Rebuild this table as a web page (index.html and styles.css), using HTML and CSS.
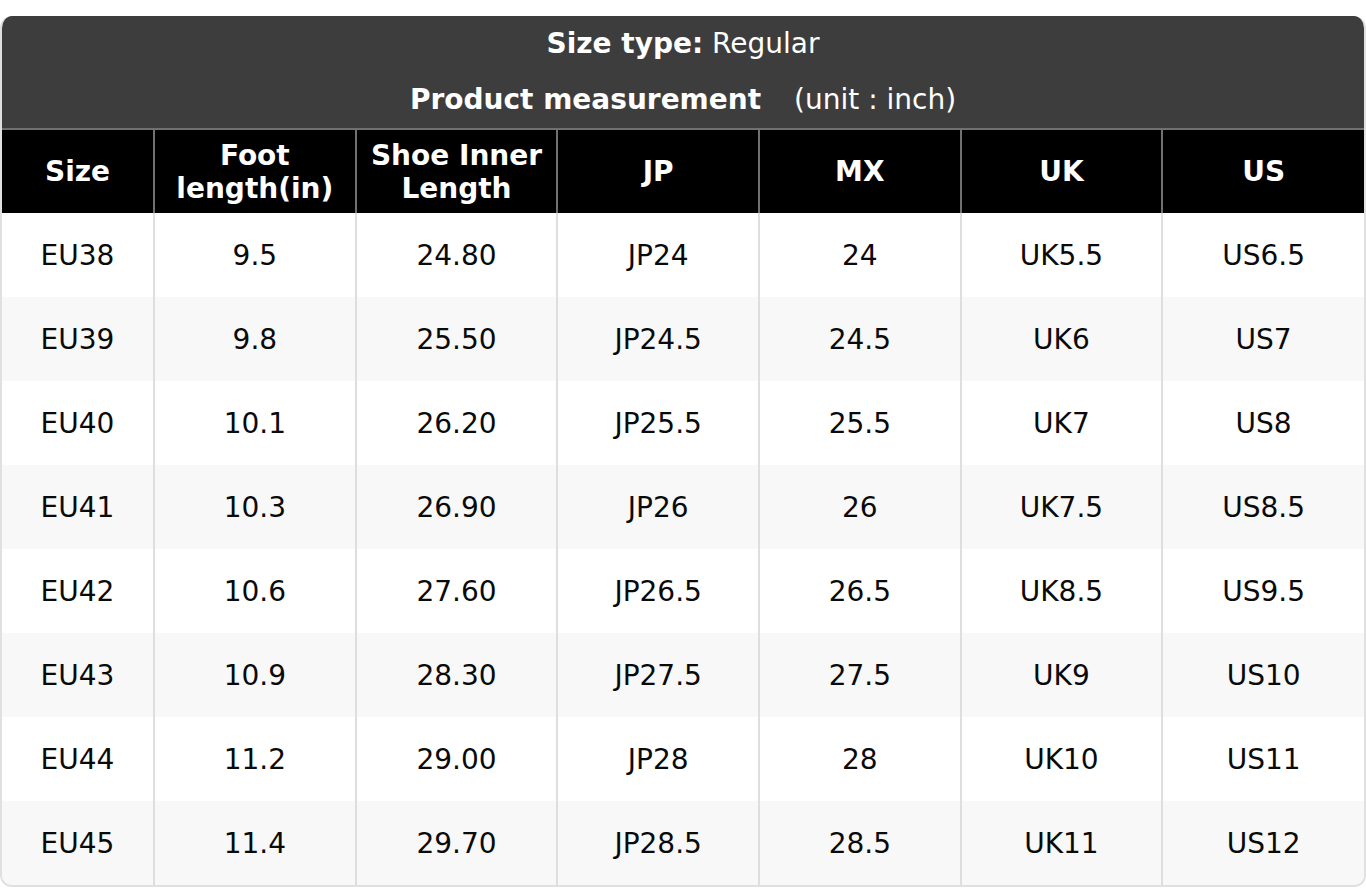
FILE: index.html
```html
<!DOCTYPE html>
<html>
<head>
<meta charset="utf-8">
<link rel="stylesheet" href="styles.css">
</head>
<body>
<div class="chart">
  <div class="title">
    <div class="title-line"><b>Size type:</b> Regular</div>
    <div class="title-line"><b>Product measurement</b><span class="unit">(unit : inch)</span></div>
  </div>
  <table class="sizes">
    <colgroup>
      <col class="c-first"><col><col><col><col><col><col>
    </colgroup>
    <thead>
      <tr><th>Size</th><th>Foot<br>length(in)</th><th>Shoe Inner<br>Length</th><th>JP</th><th>MX</th><th>UK</th><th>US</th></tr>
    </thead>
    <tbody>
      <tr><td>EU38</td><td>9.5</td><td>24.80</td><td>JP24</td><td>24</td><td>UK5.5</td><td>US6.5</td></tr>
      <tr><td>EU39</td><td>9.8</td><td>25.50</td><td>JP24.5</td><td>24.5</td><td>UK6</td><td>US7</td></tr>
      <tr><td>EU40</td><td>10.1</td><td>26.20</td><td>JP25.5</td><td>25.5</td><td>UK7</td><td>US8</td></tr>
      <tr><td>EU41</td><td>10.3</td><td>26.90</td><td>JP26</td><td>26</td><td>UK7.5</td><td>US8.5</td></tr>
      <tr><td>EU42</td><td>10.6</td><td>27.60</td><td>JP26.5</td><td>26.5</td><td>UK8.5</td><td>US9.5</td></tr>
      <tr><td>EU43</td><td>10.9</td><td>28.30</td><td>JP27.5</td><td>27.5</td><td>UK9</td><td>US10</td></tr>
      <tr><td>EU44</td><td>11.2</td><td>29.00</td><td>JP28</td><td>28</td><td>UK10</td><td>US11</td></tr>
      <tr><td>EU45</td><td>11.4</td><td>29.70</td><td>JP28.5</td><td>28.5</td><td>UK11</td><td>US12</td></tr>
    </tbody>
  </table>
</div>
</body>
</html>
```

FILE: styles.css
```css
html, body {
  margin: 0;
  padding: 0;
  background: #ffffff;
}
body {
  padding-top: 16px;
  font-family: "DejaVu Sans", "Liberation Sans", sans-serif;
  font-size: 28px;
  color: #0a0a0a;
}
.chart {
  width: 1366px;
  box-sizing: border-box;
  border: 2px solid #e0e0e0;
  border-top: none;
  border-radius: 12px;
  overflow: hidden;
}
.title {
  background: #3d3d3d;
  color: #ffffff;
  text-align: center;
  height: 112px;
  display: flex;
  flex-direction: column;
}
.title-line {
  height: 56px;
  line-height: 56px;
}
.unit {
  margin-left: 33px;
}
.sizes {
  width: 100%;
  border-collapse: collapse;
  table-layout: fixed;
}
.c-first {
  width: 152px;
}
.sizes th {
  background: #000000;
  color: #ffffff;
  font-weight: bold;
  height: 84px;
  padding: 0;
  line-height: 33px;
  border-top: 2px solid #707070;
  border-left: 2px solid #707070;
  box-sizing: border-box;
}
.sizes th:first-child {
  border-left: none;
}
.sizes td {
  height: 84px;
  padding: 0;
  text-align: center;
  border-left: 2px solid #dedede;
  box-sizing: border-box;
}
.sizes td:first-child {
  border-left: none;
}
.sizes tbody tr:nth-child(even) td {
  background: #f8f8f8;
}
```
